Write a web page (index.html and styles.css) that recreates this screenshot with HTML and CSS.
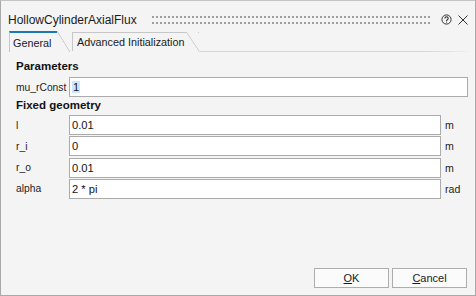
FILE: index.html
```html
<!DOCTYPE html>
<html>
<head>
<meta charset="utf-8">
<link rel="stylesheet" href="styles.css">
</head>
<body>
<div class="win">
  <div class="titlebar">
    <span class="title">HollowCylinderAxialFlux</span>
    <span class="grip"></span>
    <svg class="help" width="11" height="11" viewBox="0 0 11 11">
      <circle cx="5.5" cy="5.5" r="4.6" fill="none" stroke="#333" stroke-width="1"/>
      <path d="M3.9 4.4 A1.65 1.65 0 1 1 6.4 5.8 C5.8 6.2 5.5 6.4 5.5 7" fill="none" stroke="#333" stroke-width="1.1"/>
      <rect x="5" y="7.6" width="1" height="1" fill="#333"/>
    </svg>
    <svg class="close" width="10" height="10" viewBox="0 0 10 10">
      <path d="M0.5 0.5 L9.5 9.5 M9.5 0.5 L0.5 9.5" stroke="#333" stroke-width="1"/>
    </svg>
  </div>
  <div class="tabs">
    <div class="tab active"><span class="tab-label">General</span><span class="slant"></span></div>
    <div class="tab inactive"><span class="tab-label">Advanced Initialization</span><span class="slant"></span></div>
    <div class="tab-rest"></div>
  </div>
  <div class="pane">
    <div class="group first">Parameters</div>
    <div class="row">
      <span class="label">mu_rConst</span>
      <div class="input wide"><span class="sel">1</span></div>
    </div>
    <div class="group">Fixed geometry</div>
    <div class="row">
      <span class="label">l</span>
      <div class="input">0.01</div>
      <span class="unit">m</span>
    </div>
    <div class="row">
      <span class="label">r_i</span>
      <div class="input">0</div>
      <span class="unit">m</span>
    </div>
    <div class="row">
      <span class="label">r_o</span>
      <div class="input">0.01</div>
      <span class="unit">m</span>
    </div>
    <div class="row">
      <span class="label">alpha</span>
      <div class="input">2 * pi</div>
      <span class="unit">rad</span>
    </div>
  </div>
  <div class="buttons">
    <div class="btn"><span><u>O</u>K</span></div>
    <div class="btn"><span><u>C</u>ancel</span></div>
  </div>
</div>
</body>
</html>
```
FILE: styles.css
```css
html, body {
  margin: 0;
  padding: 0;
  background: #f4f4f4;
}
.win {
  width: 476px;
  height: 296px;
  box-sizing: border-box;
  border: 1px solid #a9a9a9;
  border-top-color: #c4c4c4;
  background: #f4f4f4;
  display: flex;
  flex-direction: column;
  font-family: "Liberation Sans", Arial, sans-serif;
  color: #1a1a1a;
}
.titlebar {
  height: 30px;
  box-sizing: border-box;
  padding: 7px 0 0 7px;
  display: flex;
  align-items: center;
}
.title {
  font-size: 12px;
  line-height: 14px;
  color: #1b1b1b;
}
.grip {
  width: 280px;
  height: 8px;
  margin-left: 15px;
  background-image:
    linear-gradient(to right, #9e9e9e 2px, transparent 2px),
    linear-gradient(to right, #9e9e9e 2px, transparent 2px);
  background-size: 4px 2px, 4px 2px;
  background-position: 0 0, 0 6px;
  background-repeat: repeat-x;
}
.help {
  margin-left: 9px;
}
.close {
  margin-left: 6px;
}
.tabs {
  height: 21px;
  display: flex;
  align-items: flex-end;
  padding-left: 8px;
}
.tab {
  display: flex;
  align-items: stretch;
  font-size: 10.8px;
  color: #1a1a1a;
}
.tab-label {
  display: flex;
  align-items: center;
  border-left: 1px solid #c6c6c6;
}
.tab.active {
  height: 21px;
}
.tab.active .tab-label {
  border-top: 2px solid #1c78b6;
  padding: 0 6px 0 3px;
  width: 38px;
}
.tab.active .slant {
  width: 13px;
}
.tab.inactive {
  height: 19px;
  margin-left: 2px;
  margin-bottom: 1px;
}
.tab.inactive .tab-label {
  border-top: 1px solid #c6c6c6;
  padding: 0 3px 0 4px;
}
.tab.inactive .slant {
  width: 12px;
  border-top: 1px solid transparent;
}
.slant {
  background: linear-gradient(to top right, transparent calc(50% - 0.7px), #c4c4c4 50%, transparent calc(50% + 0.7px));
}
.tab-rest {
  flex: 1;
  height: 1px;
  margin-right: 8px;
  background: linear-gradient(to right, #d6d6d6 85%, #eeeeee);
}
.pane {
  flex: 1;
  padding: 6px 7px 0 15px;
}
.group {
  font-weight: bold;
  font-size: 11.5px;
  line-height: 16px;
  height: 16px;
  color: #111;
  margin-bottom: 2px;
}
.group.first {
  margin-bottom: 3px;
}
.row {
  display: grid;
  grid-template-columns: 53px 1fr 27px;
  height: 20px;
  align-items: center;
}
.row + .row {
  margin-top: 1.33px;
}
.label {
  font-size: 10.3px;
  color: #1e1e1e;
}
.input {
  height: 20px;
  box-sizing: border-box;
  border: 1px solid #ababab;
  background: #ffffff;
  padding-left: 2px;
  font-size: 11.2px;
  line-height: 18px;
  color: #141414;
}
.input.wide {
  grid-column: 2 / 4;
}
.sel {
  display: inline-block;
  background: #cce8ff;
  padding: 0 1px 0 1px;
  line-height: 12px;
}
.unit {
  padding-left: 4px;
  font-size: 10.6px;
  color: #1e1e1e;
}
.buttons {
  display: flex;
  justify-content: flex-end;
  gap: 3px;
  padding: 0 8px 7px 0;
}
.btn {
  width: 75px;
  height: 20px;
  box-sizing: border-box;
  border: 1px solid #adadad;
  background: #fbfbfb;
  display: flex;
  align-items: center;
  justify-content: center;
  font-size: 11px;
  color: #1a1a1a;
}
.btn u {
  text-decoration-thickness: 1px;
  text-underline-offset: 1px;
}
```
